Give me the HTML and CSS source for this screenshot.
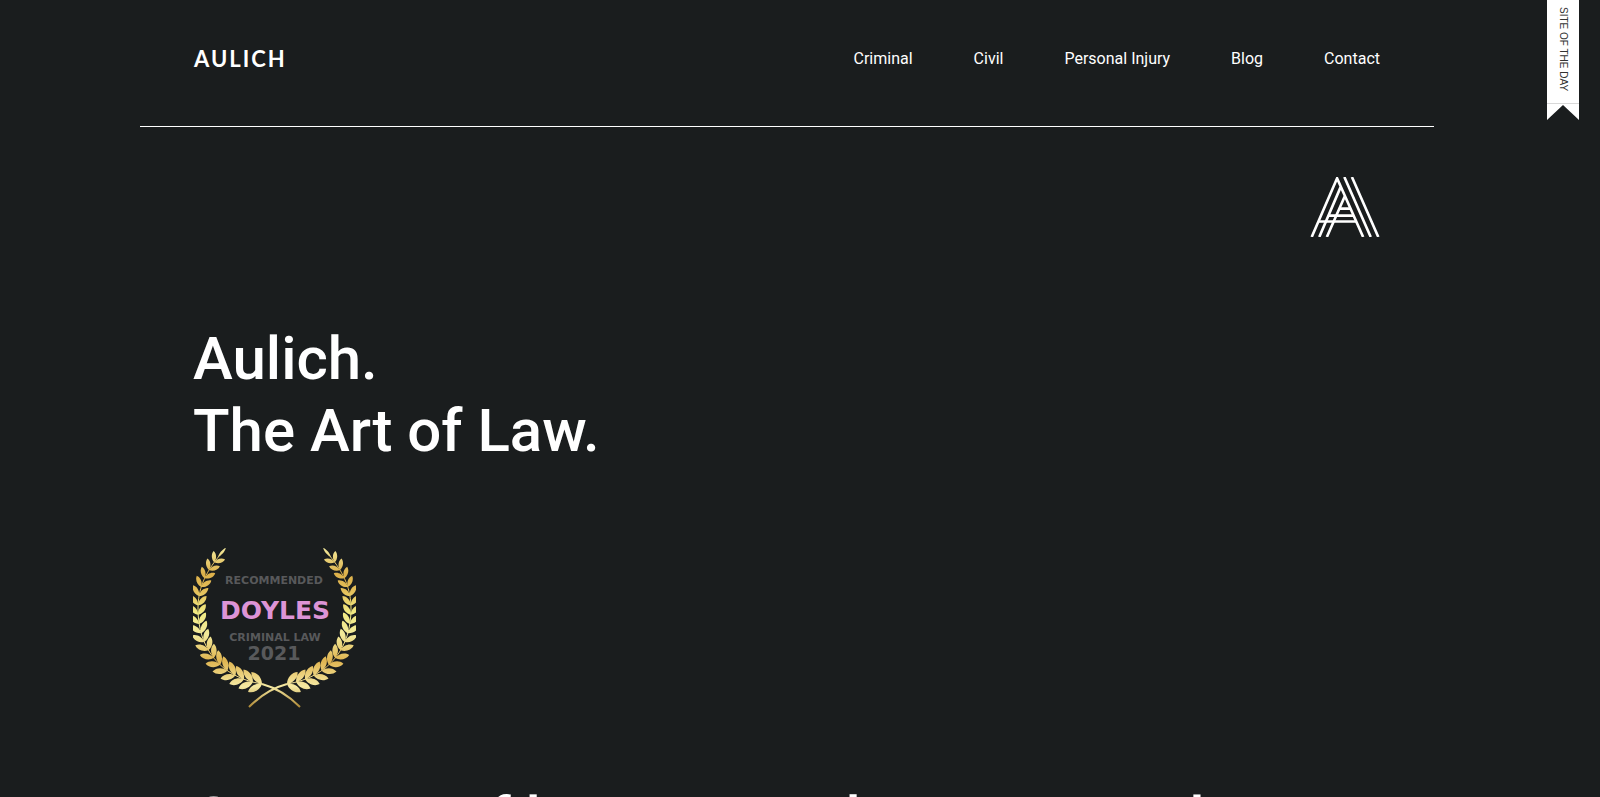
FILE: index.html
```html
<!DOCTYPE html>
<html lang="en">
<head>
<meta charset="utf-8">
<title>Aulich. The Art of Law.</title>
<link rel="stylesheet" href="styles.css">
</head>
<body>
<div class="page">
  <header class="header">
    <a class="brand" href="#">AULICH</a>
    <nav class="nav" aria-label="Main">
      <a href="#">Criminal</a>
      <a href="#">Civil</a>
      <a href="#">Personal Injury</a>
      <a href="#">Blog</a>
      <a href="#">Contact</a>
    </nav>
  </header>
  <main class="main">
    <svg class="monogram" viewBox="30 21 210 182" role="img" aria-label="Aulich monogram">
      <g fill="none" stroke="#fff" stroke-width="8">
        <path d="M34 203L111 25L190 203M57 203L122 51M80 203L135 78M133 21L213 203M156 21L236 203"/>
        <path d="M117 117H151M85 138H160M54 156H169"/>
      </g>
    </svg>
    <h1 class="title">Aulich.<br>The Art of Law.</h1>
    <svg class="award" viewBox="8 8 163 161" role="img" aria-label="Recommended, Doyles Criminal Law 2021">
      <defs>
        <linearGradient id="gold" gradientUnits="userSpaceOnUse" x1="0" y1="8" x2="0" y2="169">
          <stop offset="0" stop-color="#f3e99a"/>
          <stop offset=".16" stop-color="#dcb04a"/>
          <stop offset=".26" stop-color="#e3bd58"/>
          <stop offset=".4" stop-color="#f1ea82"/>
          <stop offset=".54" stop-color="#f2e99a"/>
          <stop offset=".7" stop-color="#dfb450"/>
          <stop offset=".86" stop-color="#f5e9a2"/>
          <stop offset="1" stop-color="#a8802c"/>
        </linearGradient>
        <g id="branch">
          <path id="stem" d="M35 15C19 34 13 50 13 69C13 107 34 137 77 144" fill="none" stroke="url(#gold)" stroke-width="1"/>
          <path d="M77 144C92 148 105 157 115 167" fill="none" stroke="url(#gold)" stroke-width="2"/>
          <path id="leaves" fill="url(#gold)"/>
        </g>
      </defs>
      <use href="#branch"/>
      <use href="#branch" transform="matrix(-1 0 0 1 179 0)"/>
      <g class="award-text">
        <text class="award-small" x="89" y="44">RECOMMENDED</text>
        <text class="award-name" x="90" y="79">DOYLES</text>
        <text class="award-small" x="90" y="101">CRIMINAL LAW</text>
        <text class="award-year" x="89" y="120">2021</text>
      </g>
    </svg>
    <p class="intro">Our team of lawyers are here as your best</p>
  </main>
</div>
<a class="ribbon" href="#"><span>SITE OF THE DAY</span></a>
<script src="laurel.js"></script>
</body>
</html>
```
FILE: styles.css
```css
* { box-sizing: border-box; }
html { background: #1a1d1e; }
body {
  margin: 0;
  height: 100vh;
  overflow: hidden;
  background: #1a1d1e;
  color: #fff;
  font-family: Roboto, "Liberation Sans", sans-serif;
}
a { color: inherit; text-decoration: none; }
.page { padding: 0 166px 0 140px; }
.header {
  display: flex;
  align-items: center;
  justify-content: space-between;
  padding: 40px 54px 48px;
  border-bottom: 1px solid #fff;
}
.brand {
  font: bold 22px/38px Lato, sans-serif;
  letter-spacing: 2px;
}
.nav {
  display: flex;
  gap: 61px;
  font-size: 16px;
  line-height: 36px;
}
.main {
  display: flex;
  flex-direction: column;
  padding: 50px 54px 0 53px;
}
.monogram { width: 70px; height: 60px; align-self: flex-end; }
.title {
  margin: 86px 0 0;
  font-size: 60px;
  line-height: 72px;
  font-weight: 500;
}
.award { width: 163px; height: 161px; margin-top: 81px; }
.award-text {
  font-family: "DejaVu Sans", sans-serif;
  font-weight: bold;
  text-anchor: middle;
  fill: #58595b;
}
.award-small { font-size: 11px; }
.award-name { font-size: 25px; fill: #dd94d6; }
.award-year { font-size: 19px; }
.intro {
  margin: 74px 0 0;
  font-size: 60px;
  line-height: 72px;
  font-weight: 500;
  white-space: nowrap;
}
.ribbon {
  position: absolute;
  top: 0;
  right: 21px;
  display: flex;
  justify-content: center;
  padding: 7px 0 29px;
  width: 32px;
  background: linear-gradient(#fff 0 103px, #d8d8d8 103px 104px, #fff 104px);
  clip-path: polygon(0 0, 100% 0, 100% 100%, 50% calc(100% - 15px), 0 100%);
  color: #333;
  font: 10px/16px "Liberation Sans", sans-serif;
}
.ribbon span { writing-mode: vertical-rl; }
```
FILE: laurel.js
```js
// Grow pairs of leaves along the laurel stem.
const stem = document.getElementById("stem");
const total = stem.getTotalLength();
const pairs = 18;
let d = "";

function leaf(x, y, angle, length, width) {
  const c = Math.cos(angle), s = Math.sin(angle);
  const at = (u, v) => `${(x + u * c - v * s).toFixed(1)} ${(y + u * s + v * c).toFixed(1)}`;
  d += `M${at(0, 0)}C${at(length * 0.3, width)} ${at(length * 0.75, width)} ${at(length, 0)}`
     + `C${at(length * 0.75, -width)} ${at(length * 0.3, -width)} ${at(0, 0)}Z`;
}

for (let i = 0; i < pairs; i++) {
  const t = (i + 1) / pairs;
  const p = stem.getPointAtLength(total * t);
  const q = stem.getPointAtLength(total * t - 1);
  const angle = Math.atan2(q.y - p.y, q.x - p.x);
  const length = 11 + 5 * t;
  const width = 2.8 + 1.4 * t;
  leaf(p.x, p.y, angle - 0.68, length, width);
  leaf(p.x, p.y, angle + 0.68, length, width);
}
leaf(33, 17, -0.86, 12, 1.7);
document.getElementById("leaves").setAttribute("d", d);
```
